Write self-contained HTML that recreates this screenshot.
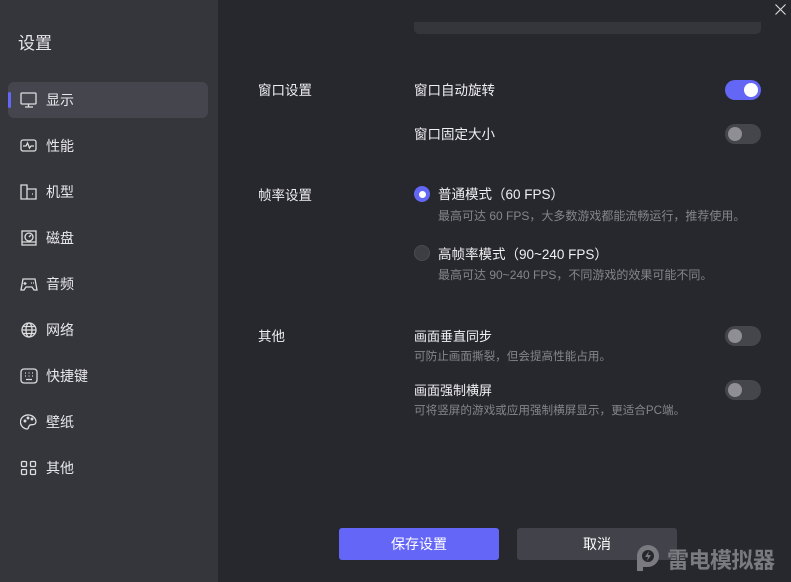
<!DOCTYPE html>
<html><head><meta charset="utf-8"><style>
*{margin:0;padding:0;box-sizing:border-box}
body{width:791px;height:582px;overflow:hidden;background:#27272e;font-family:"Liberation Sans","Noto Sans CJK SC",sans-serif;color:#e8e8ec;position:relative}
.side{position:absolute;left:0;top:0;width:218px;height:582px;background:#35353c}
.t{position:absolute;white-space:nowrap}
.nav{position:absolute;left:8px;width:200px;height:36px;font-size:14px}
.nav svg{position:absolute;left:12px;top:10px}
.nav span{position:absolute;left:38px;top:8px}
.act{background:#45454e;border-radius:6px}
.act:before{content:"";position:absolute;left:0;top:10px;width:3px;height:16px;background:#6366f6;border-radius:2px}
.tg{position:absolute;width:36px;height:20px;border-radius:10px;background:#45454c}
.tg i{position:absolute;left:3px;top:3px;width:14px;height:14px;border-radius:50%;background:#8e8e94}
.tg.on{background:#6466f5}.tg.on i{left:19px;background:#fff}
.lbl{font-size:13.5px;color:#f0f0f2}
.sub{font-size:12px;color:#85858c}
.rd{position:absolute;width:16px;height:16px;border-radius:50%}
.btn{position:absolute;top:528px;width:160px;height:32px;border-radius:3px;text-align:center;line-height:32px;font-size:14px;color:#fff}
</style></head><body>
<div class="side">
<div class="t" style="left:18px;top:29px;font-size:17px">设置</div>
<div class="nav act" style="top:82px"><svg width="18" height="16" viewBox="0 0 18 16" fill="none" stroke="#ddd" stroke-width="1.3"><rect x="1" y="1" width="15" height="11" rx="1"/><path d="M5 15h8M8.5 12v3"/></svg><span>显示</span></div>
<div class="nav" style="top:128px"><svg width="18" height="16" viewBox="0 0 18 16" fill="none" stroke="#ddd" stroke-width="1.3"><rect x="1" y="2" width="15" height="11" rx="2"/><path d="M3 8h3l1.5-3 2 5 1.5-2h3"/></svg><span>性能</span></div>
<div class="nav" style="top:174px"><svg width="18" height="16" viewBox="0 0 18 16" fill="none" stroke="#ddd" stroke-width="1.3"><path d="M1 1h6v4h9v10H1z M7 5v10"/><path d="M12 10h1"/></svg><span>机型</span></div>
<div class="nav" style="top:220px"><svg width="18" height="16" viewBox="0 0 18 16" fill="none" stroke="#ddd" stroke-width="1.3"><rect x="2" y="1" width="14" height="14"/><circle cx="9" cy="7" r="4"/><path d="M9 7l2-2M2 12h14"/></svg><span>磁盘</span></div>
<div class="nav" style="top:266px"><svg width="18" height="16" viewBox="0 0 18 16" fill="none" stroke="#ddd" stroke-width="1.3"><path d="M3 3h12l2 11h-3l-2-3H6l-2 3H1z"/><path d="M5 6v3M3.5 7.5h3M11 7h1M13 7h1"/></svg><span>音频</span></div>
<div class="nav" style="top:312px"><svg width="18" height="16" viewBox="0 0 18 16" fill="none" stroke="#ddd" stroke-width="1.3"><circle cx="9" cy="8" r="7"/><ellipse cx="9" cy="8" rx="3" ry="7"/><path d="M2 8h14M3 4.5h12M3 11.5h12"/></svg><span>网络</span></div>
<div class="nav" style="top:358px"><svg width="18" height="16" viewBox="0 0 18 16" fill="none" stroke="#ddd" stroke-width="1.3"><rect x="1" y="1" width="16" height="14" rx="3"/><path d="M5 5h1M8.5 5h1M12 5h1M5 8h1M8.5 8h1M12 8h1M6 11.5h6"/></svg><span>快捷键</span></div>
<div class="nav" style="top:404px"><svg width="18" height="16" viewBox="0 0 18 16" fill="none" stroke="#ddd" stroke-width="1.3"><path d="M9 1a7.5 7 0 0 0-2 14c2 0 1-3 3-4s5 1 6-3A8 7 0 0 0 9 1z"/><circle cx="5" cy="7" r=".8"/><circle cx="8" cy="4" r=".8"/><circle cx="12" cy="5" r=".8"/></svg><span>壁纸</span></div>
<div class="nav" style="top:450px"><svg width="18" height="16" viewBox="0 0 18 16" fill="none" stroke="#ddd" stroke-width="1.3"><rect x="1.5" y="1.5" width="5" height="5" rx="1"/><rect x="10.5" y="1.5" width="5" height="5" rx="1"/><rect x="1.5" y="9.5" width="5" height="5" rx="1"/><rect x="10.5" y="9.5" width="5" height="5" rx="1"/></svg><span>其他</span></div>
</div>
<svg style="position:absolute;left:775px;top:4px" width="11" height="11" viewBox="0 0 11 11" stroke="#ddd" stroke-width="1.1"><path d="M0.5 0.5l10 10M10.5 0.5l-10 10"/></svg>
<div style="position:absolute;left:414px;top:22px;width:347px;height:12px;background:#35353c;border-radius:0 0 5px 5px"></div>

<div class="t lbl" style="left:258px;top:79px">窗口设置</div>
<div class="t lbl" style="left:414px;top:79px">窗口自动旋转</div>
<div class="tg on" style="left:725px;top:80px"><i></i></div>
<div class="t lbl" style="left:414px;top:123px">窗口固定大小</div>
<div class="tg" style="left:725px;top:124px"><i></i></div>

<div class="t lbl" style="left:258px;top:184px">帧率设置</div>
<div class="rd" style="left:414px;top:186px;background:#6466f5"><div style="position:absolute;left:4.5px;top:4.5px;width:7px;height:7px;border-radius:50%;background:#fff"></div></div>
<div class="t lbl" style="left:438px;top:183px">普通模式（60 FPS）</div>
<div class="t sub" style="left:438px;top:207px">最高可达 60 FPS，大多数游戏都能流畅运行，推荐使用。</div>
<div class="rd" style="left:414px;top:245px;background:#3d3d44;border:1px solid #4a4a52"></div>
<div class="t lbl" style="left:438px;top:243px">高帧率模式（90~240 FPS）</div>
<div class="t sub" style="left:438px;top:266px">最高可达 90~240 FPS，不同游戏的效果可能不同。</div>

<div class="t lbl" style="left:258px;top:325px">其他</div>
<div class="t lbl" style="left:414px;top:326px;font-size:13px">画面垂直同步</div>
<div class="t sub" style="left:414px;top:348px;font-size:11.6px">可防止画面撕裂，但会提高性能占用。</div>
<div class="tg" style="left:725px;top:326px"><i></i></div>
<div class="t lbl" style="left:414px;top:380px;font-size:13px">画面强制横屏</div>
<div class="t sub" style="left:414px;top:402px;font-size:11.6px">可将竖屏的游戏或应用强制横屏显示，更适合PC端。</div>
<div class="tg" style="left:725px;top:380px"><i></i></div>

<div class="btn" style="left:339px;background:#6466f8">保存设置</div>
<div class="btn" style="left:517px;background:#42424b">取消</div>
<svg style="position:absolute;left:634px;top:543px" width="28" height="30" viewBox="0 0 28 30"><path d="M3 28V13a11 11 0 1 1 11 11H9v4z" fill="#7a7a80"/><circle cx="14" cy="13" r="6" fill="#27272e"/><path d="M15 8l-4 6h3l-1 4 4-6h-3z" fill="#7a7a80"/></svg>
<div class="t" style="left:667px;top:543px;font-size:22px;font-weight:bold;color:#7a7a80;letter-spacing:-0.5px">雷电模拟器</div>
</body></html>
